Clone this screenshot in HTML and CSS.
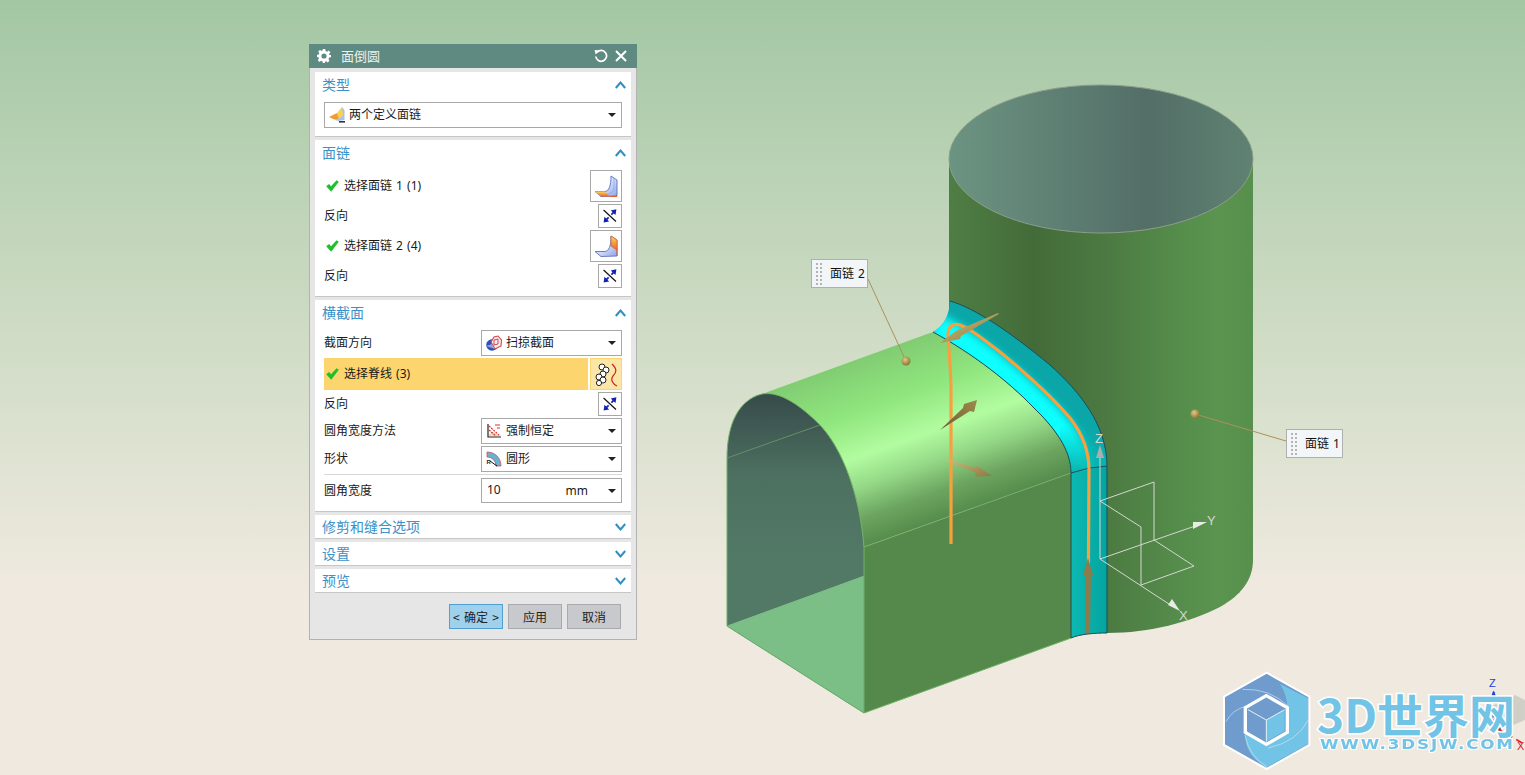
FILE: index.html
```html
<!DOCTYPE html>
<html lang="zh-CN">
<head>
<meta charset="utf-8">
<title>面倒圆</title>
<link rel="stylesheet" href="styles.css">
</head>
<body>
<svg width="0" height="0" class="defs">
  <defs>
    <linearGradient id="faceBlue" x1="0" y1="0" x2="1" y2="1">
      <stop offset="0" stop-color="#f8faff"/><stop offset=".55" stop-color="#cddaf8"/><stop offset="1" stop-color="#8ea4e8"/>
    </linearGradient>
    <linearGradient id="orangeBand" x1="0" y1="0" x2="0" y2="1">
      <stop offset="0" stop-color="#fbd860"/><stop offset="1" stop-color="#ee6320"/>
    </linearGradient>
    <symbol id="swap" viewBox="0 0 24 24">
      <path d="M5 5.5 L18.5 18" stroke="#111" stroke-width="1.3" fill="none"/>
      <path d="M13.5 10.5 L16 8 M10.5 13.5 L8 16" stroke="#1020b8" stroke-width="1.8" fill="none"/>
      <path d="M19 4.5 L18 11 L12.8 6 Z M5 19 L6 12.8 L11 18 Z" fill="#1020b8"/>
    </symbol>
    <symbol id="check" viewBox="0 0 13 12">
      <path d="M0.2 6.2 L3.1 3.9 L5 6.2 L10.6 0.2 L12.8 1.8 L5.2 11.8 Z" fill="#22bf2c"/>
    </symbol>
    <symbol id="faceA" viewBox="0 0 30 30">
      <path d="M20 5 L26 9 V25 L10 25.5 L4 20.5 H14 C18 20 20 15 20 5 Z" fill="url(#faceBlue)" stroke="#5a70c0" stroke-width=".9"/>
      <path d="M23 7 V17 C23 21 19 23.5 14 23.5" fill="none" stroke="#8ea2de" stroke-width=".7"/>
      <path d="M4 20.5 H14 L19 25.5 H10 Z" fill="url(#orangeBand)"/>
      <path d="M19 25.5 H26" stroke="#e0602a" stroke-width="1"/>
    </symbol>
    <symbol id="faceB" viewBox="0 0 30 30">
      <path d="M20 5 L26 9 V25 L10 25.5 L4 20.5 H14 C18 20 20 15 20 5 Z" fill="url(#faceBlue)" stroke="#5a70c0" stroke-width=".9"/>
      <path d="M20 5 L26 9 V19 L20 15 Z" fill="url(#orangeBand)" stroke="#e0602a" stroke-width=".8"/>
      <path d="M26 18 V25" stroke="#e0602a" stroke-width="1"/>
    </symbol>
  </defs>
</svg>

<main class="canvas">
  <svg class="scene" width="1525" height="775" viewBox="0 0 1525 775">
    <defs>
      <linearGradient id="cyl" gradientUnits="userSpaceOnUse" x1="949" y1="0" x2="1253" y2="0">
        <stop offset="0" stop-color="#4f7e45"/><stop offset=".28" stop-color="#436b39"/><stop offset=".52" stop-color="#4c7a42"/>
        <stop offset=".75" stop-color="#558c4b"/><stop offset=".88" stop-color="#5a944f"/><stop offset="1" stop-color="#57904d"/>
      </linearGradient>
      <linearGradient id="topFace" gradientUnits="userSpaceOnUse" x1="949" y1="0" x2="1253" y2="0">
        <stop offset="0" stop-color="#6c9482"/><stop offset=".65" stop-color="#536e67"/><stop offset="1" stop-color="#5f8272"/>
      </linearGradient>
      <linearGradient id="shell" gradientUnits="userSpaceOnUse" x1="930" y1="333" x2="990" y2="501.5">
        <stop offset="0" stop-color="#80cc72"/><stop offset=".28" stop-color="#90e67e"/><stop offset=".52" stop-color="#b2fca0"/>
        <stop offset=".68" stop-color="#95d987"/><stop offset=".85" stop-color="#6ca560"/><stop offset="1" stop-color="#568c4c"/>
      </linearGradient>
      <linearGradient id="inner" gradientUnits="userSpaceOnUse" x1="0" y1="394" x2="0" y2="560">
        <stop offset="0" stop-color="#374b4a"/><stop offset=".5" stop-color="#4d7161"/><stop offset="1" stop-color="#527866"/>
      </linearGradient>
      <linearGradient id="strip" gradientUnits="userSpaceOnUse" x1="1071" y1="0" x2="1107" y2="0">
        <stop offset="0" stop-color="#0cb9b2"/><stop offset="1" stop-color="#05a4a0"/>
      </linearGradient>
      <linearGradient id="stripFade" gradientUnits="userSpaceOnUse" x1="0" y1="425" x2="0" y2="472">
        <stop offset="0" stop-color="#0ab5b0" stop-opacity="0"/><stop offset="1" stop-color="#0ab5b0" stop-opacity="1"/>
      </linearGradient>
      <linearGradient id="brass" x1="0" y1="0" x2="1" y2="1">
        <stop offset="0" stop-color="#d2ba78"/><stop offset="1" stop-color="#8b7a45"/>
      </linearGradient>
      <linearGradient id="brassDark" x1="0" y1="1" x2="1" y2="0">
        <stop offset="0" stop-color="#6f5e33"/><stop offset="1" stop-color="#9c8a4c"/>
      </linearGradient>
      <radialGradient id="ball" cx=".4" cy=".35" r=".7">
        <stop offset="0" stop-color="#e2c884"/><stop offset="1" stop-color="#84702f"/>
      </radialGradient>
      <clipPath id="upperStrip">
        <path d="M950 301 C975 308 1010 332 1050 365 C1080 392 1107 425 1107 466 L1071 473 C1071 450 1055 428 1033 407 C1010 383 975 355 933 332 C945 325 949 315 950 301 Z"/>
      </clipPath>
      <filter id="soft" x="-20%" y="-20%" width="140%" height="140%"><feGaussianBlur stdDeviation="4.5"/></filter>
    </defs>

    <!-- vertical cylinder -->
    <path d="M949 159 V480 L1080 630 L1107 633 C1150 633 1190 622 1220 607 C1241 595 1253 580 1253 560 V159 Z" fill="url(#cyl)"/>
    <ellipse cx="1101" cy="159" rx="152" ry="74" fill="url(#topFace)" stroke="#8d9d8b" stroke-width="1"/>

    <!-- horizontal tunnel -->
    <path d="M727 626 V458 C727 425 738 400 762 394 C780 391 800 405 820 425 C842 448 860 495 864 547 V576 Z" fill="url(#inner)"/>
    <path d="M727 458 L820 425" stroke="#668f6a" stroke-width="1" fill="none"/>
    <path d="M727 626 L864 576 V713 Z" fill="#7bbe86" stroke="#6fb57c" stroke-width=".6"/>
    <path d="M864 547 L1071 473 V638 L864 713 Z" fill="#55894b"/>
    <path d="M933 332 C975 355 1010 383 1033 407 C1055 428 1071 450 1071 473 L864 547 C860 495 842 448 820 425 C800 405 780 391 762 394 L930 333 Z" fill="url(#shell)"/>
    <path d="M727 626 V458 C727 425 738 400 762 394 C780 391 800 405 820 425 C842 448 860 495 864 547 V713 L1071 638" fill="none" stroke="#6fb066" stroke-width="1"/>
    <path d="M727 626 L864 713" stroke="#66ad6a" stroke-width="1" fill="none"/>
    <path d="M864 547 L1071 473" stroke="#7ab06e" stroke-width="1" fill="none"/>

    <!-- blend strip -->
    <path d="M1071 473 L1107 466 V633 C1095 633 1080 634 1071 638 Z" fill="url(#strip)"/>
    <g clip-path="url(#upperStrip)">
      <rect x="925" y="295" width="190" height="185" fill="#0aa6a8"/>
      <path d="M935 326 C975 348 1015 383 1042 410 C1062 430 1078 450 1080 480" fill="none" stroke="#10ffff" stroke-width="27" filter="url(#soft)"/>
      <rect x="1060" y="420" width="50" height="55" fill="url(#stripFade)"/>
    </g>
    <path d="M950 301 C975 308 1010 332 1050 365 C1080 392 1107 425 1107 466 V633 C1095 633 1080 634 1071 638 V473 C1071 450 1055 428 1033 407 C1010 383 975 355 933 332" fill="none" stroke="#1f4c55" stroke-width="1"/>
    <path d="M1071 473 Q1088 467 1107 466" fill="none" stroke="#1f4c55" stroke-width="1"/>

    <!-- spine -->
    <path d="M951 544 V390 C951 370 949 355 948 335 C948 326 953 323 960 325 C972 329 985 341 1000 352 C1015 364 1028 376 1040 387 C1052 398 1062 409 1070 418 C1081 432 1089 448 1089 470 L1088 632" fill="none" stroke="#f8a040" stroke-width="3.2"/>

    <!-- direction arrows -->
    <polygon points="998,313 958,330 956,331 940,343 960,339 961,336 999,314" fill="url(#brass)"/>
    <polygon points="940,430 963,408 964,404 977,400 974,412 970,411" fill="url(#brassDark)"/>
    <polygon points="947,459.5 976,468 977,465.5 992,476 976,476.5 975,472.5 947,460.5" fill="url(#brass)"/>
    <polygon points="1086,633 1085,575 1083,575 1088,558 1093,575 1091,575 1090,633" fill="#8a7c4c"/>

    <!-- work triad -->
    <g fill="none" stroke="#d4d8d0" stroke-width="1">
      <path d="M1100 559 V455"/>
      <path d="M1100 559 L1198 525"/>
      <path d="M1100 559 L1172 606"/>
      <path d="M1100 501 L1154 482 V540 M1100 501 L1141 527 V585 M1154 540 L1194 566 L1141 585"/>
    </g>
    <polygon points="1100,445 1104,458 1096,458" fill="#a9b0ac"/>
    <polygon points="1207,522 1193,529 1193,522" fill="#e8ebe6"/>
    <polygon points="1180,611 1168,605 1172,599" fill="#e8ebe6"/>
    <text class="axis" x="1095" y="443">Z</text>
    <text class="axis" x="1207" y="525">Y</text>
    <text class="axis" x="1179" y="620">X</text>

    <!-- callout leaders -->
    <path d="M868 279 L906 361" stroke="#a8935a" stroke-width="1" fill="none"/>
    <circle cx="906" cy="361" r="4.5" fill="url(#ball)"/>
    <path d="M1286 441 L1195 414" stroke="#a8935a" stroke-width="1" fill="none"/>
    <circle cx="1195" cy="414" r="4.5" fill="url(#ball)"/>

    <!-- small corner triad -->
    <g transform="translate(1200 660) scale(.3333)">
      <polygon points="885,130 945,105 975,120 975,180 905,210 870,195" fill="#cfcfc6"/>
      <path d="M881 95 V190" stroke="#1b3fe0" stroke-width="6" stroke-dasharray="14 7"/>
      <polygon points="881,92 889,110 873,110" fill="#1b3fe0"/>
      <path d="M870 200 Q885 212 905 205" stroke="#666" stroke-width="7" fill="none"/>
      <path d="M890 205 L972 252" stroke="#d8222a" stroke-width="5" stroke-dasharray="20 14"/>
    </g>
    <text class="miniZ" x="1489" y="687">Z</text>
    <text class="miniX" x="1517" y="750">X</text>

    <!-- watermark logo -->
    <g transform="translate(1200 660) scale(.3333)">
      <polygon points="200,38 328,110 328,255 200,327 72,255 72,110" fill="#6f9ccd" stroke="#fff" stroke-width="6"/>
      <path d="M240 72 L324 115 V252 L200 322 C160 300 135 270 135 220 L199 253 L262 217 V143 Q262 105 240 72 Z" fill="#72c4e6"/>
      <path d="M128 88 Q210 85 264 138 M78 185 Q95 150 140 138 M135 225 Q148 290 200 320 M325 180 Q292 245 205 264" fill="none" stroke="#d3e3f3" stroke-width="2"/>
      <polygon points="199,107 262,143 262,217 199,253 136,217 136,143" fill="none" stroke="#fff" stroke-width="10"/>
      <polygon points="199,118 254,149 254,213 199,245 144,213 144,149" fill="#6f9ccd"/>
      <polygon points="254,149 254,213 199,245 199,180" fill="#72c4e6"/>
      <path d="M144 149 L199 180 L254 149 M199 180 V245" fill="none" stroke="#fff" stroke-width="2.5"/>
    </g>
  </svg>

  <div class="brand-name">3D世界网</div>
  <div class="brand-url">WWW.3DSJW.COM</div>

  <div class="callout callout-two"><span class="grip"></span><span class="callout-text">面链 2</span></div>
  <div class="callout callout-one"><span class="grip"></span><span class="callout-text">面链 1</span></div>

  <section class="dialog">
    <header class="titlebar">
      <svg class="title-gear" width="14" height="14" viewBox="0 0 14 14">
        <path d="M5.8 0 H8.2 L8.6 2 L10.1 2.7 L11.9 1.6 L13.4 3.4 L12 5 L12.4 6 H14 V8.2 L12.2 8.6 L11.5 10.1 L12.5 11.8 L10.8 13.4 L9.1 12.2 L8.2 12.5 L7.9 14 H5.8 L5.4 12.3 L4 11.8 L2.3 12.9 L.8 11.2 L1.9 9.6 L1.4 8.3 L0 8 V5.8 L1.8 5.4 L2.3 4.1 L1.2 2.5 L3 .9 L4.6 1.9 L5.5 1.6 Z M7 4.4 A2.6 2.6 0 1 0 7 9.6 A2.6 2.6 0 1 0 7 4.4 Z" fill="#fff" fill-rule="evenodd"/>
      </svg>
      <span class="title-text">面倒圆</span>
      <svg class="title-reset" width="14" height="14" viewBox="0 0 14 14">
        <path d="M3 3.4 A5.4 5.4 0 1 1 1.8 7.5" fill="none" stroke="#fff" stroke-width="1.7"/>
        <path d="M0.6 1 L5.6 1.4 L1.6 5.6 Z" fill="#fff"/>
      </svg>
      <svg class="title-close" width="12" height="12" viewBox="0 0 12 12">
        <path d="M1 1 L11 11 M11 1 L1 11" stroke="#fff" stroke-width="2" fill="none"/>
      </svg>
    </header>

    <div class="panel">
      <div class="group-head"><span class="group-title">类型</span><svg class="chev" viewBox="0 0 11 8"><path d="M.8 7 L5.5 1.5 L10.2 7" /></svg></div>
      <div class="group-body">
        <div class="select select-wide">
          <svg class="glyph" viewBox="0 0 16 16">
            <path d="M4 12 L9 6 L13 0 L15.5 3 V13 L9 14 Z" fill="#a9c0f0"/>
            <path d="M0 10 L8 6 L9.5 12 L4 12 Z" fill="#f29a32"/>
            <path d="M8 6 L13 0 L14 8 L10 12 Z" fill="#fbd34a"/>
            <path d="M10 14 H16 V15.6 H10 Z" fill="#333"/>
          </svg>
          <span class="select-text">两个定义面链</span><i class="caret"></i>
        </div>
      </div>
    </div>

    <div class="panel">
      <div class="group-head"><span class="group-title">面链</span><svg class="chev" viewBox="0 0 11 8"><path d="M.8 7 L5.5 1.5 L10.2 7" /></svg></div>
      <div class="group-body">
        <div class="row row-pick">
          <span class="pick"><svg class="check"><use href="#check"/></svg>选择面链 1 (1)</span>
          <span class="tool tool-big"><svg class="tool-art-big"><use href="#faceA"/></svg></span>
        </div>
        <div class="row"><span class="label">反向</span><span class="tool"><svg class="tool-art"><use href="#swap"/></svg></span></div>
        <div class="row row-pick">
          <span class="pick"><svg class="check"><use href="#check"/></svg>选择面链 2 (4)</span>
          <span class="tool tool-big"><svg class="tool-art-big"><use href="#faceB"/></svg></span>
        </div>
        <div class="row"><span class="label">反向</span><span class="tool"><svg class="tool-art"><use href="#swap"/></svg></span></div>
      </div>
    </div>

    <div class="panel">
      <div class="group-head"><span class="group-title">横截面</span><svg class="chev" viewBox="0 0 11 8"><path d="M.8 7 L5.5 1.5 L10.2 7" /></svg></div>
      <div class="group-body">
        <div class="row">
          <span class="label">截面方向</span>
          <div class="select">
            <svg class="glyph" viewBox="0 0 16 16">
              <circle cx="6" cy="10" r="5.8" fill="#2a52b8"/>
              <path d="M5 7 L8 2 L12 1 L15.5 5 L15 11 L9 14 Z" fill="#f3eef0" stroke="#d8404a" stroke-width="1.1"/>
              <path d="M8 5 L12 4 L12 9 L8 10 Z" fill="none" stroke="#d8404a" stroke-width="1"/>
              <path d="M0 11 L6 9 L9 14 Z" fill="#8fa6d8"/>
            </svg>
            <span class="select-text">扫掠截面</span><i class="caret"></i>
          </div>
        </div>
        <div class="row row-active">
          <span class="pick pick-active"><svg class="check"><use href="#check"/></svg>选择脊线 (3)</span>
          <span class="tool tool-big tool-active">
            <svg class="tool-art-big" viewBox="0 0 30 30">
              <g fill="#fff" stroke="#222" stroke-width="1">
                <circle cx="11" cy="8" r="3"/><circle cx="15" cy="11" r="3"/><circle cx="12" cy="15" r="3"/><circle cx="8" cy="18" r="3"/><circle cx="12" cy="21" r="3"/><circle cx="8" cy="24" r="2.6"/>
              </g>
              <path d="M21 5 C26 10 26 13 22 17 C19 21 22 25 26 27" fill="none" stroke="#cc2222" stroke-width="1.2"/>
            </svg>
          </span>
        </div>
        <div class="row"><span class="label">反向</span><span class="tool"><svg class="tool-art"><use href="#swap"/></svg></span></div>
        <div class="row">
          <span class="label">圆角宽度方法</span>
          <div class="select">
            <svg class="glyph" viewBox="0 0 16 16">
              <path d="M3 13 Q4 5 13 13 Z" fill="#f6d7a8"/>
              <path d="M2 1 V14 H15" fill="none" stroke="#222" stroke-width="1.2"/>
              <path d="M3 3 L14 13 M3 7 L10 13" stroke="#d83030" stroke-width="1.2" stroke-dasharray="2 1"/>
              <path d="M9 2 H14 M11 5 H14" stroke="#d83030" stroke-width="1"/>
            </svg>
            <span class="select-text">强制恒定</span><i class="caret"></i>
          </div>
        </div>
        <div class="row">
          <span class="label">形状</span>
          <div class="select">
            <svg class="glyph" viewBox="0 0 16 16">
              <path d="M1 1 C9 1 15 7 15 15 H10 C10 10 6 6 1 6 Z" fill="#62b5cf" stroke="#c8506a" stroke-width=".8"/>
              <path d="M4 10 L11 15" stroke="#111" stroke-width="1"/>
              <text class="glyph-r" x="0.5" y="13">R</text>
            </svg>
            <span class="select-text">圆形</span><i class="caret"></i>
          </div>
        </div>
        <div class="divider"></div>
        <div class="row row-input">
          <span class="label">圆角宽度</span>
          <div class="select select-input">
            <span class="input-value">10</span><span class="input-unit">mm</span><i class="caret"></i>
          </div>
        </div>
      </div>
    </div>

    <div class="panel panel-closed">
      <div class="group-head"><span class="group-title">修剪和缝合选项</span><svg class="chev" viewBox="0 0 11 8"><path d="M.8 1 L5.5 6.5 L10.2 1" /></svg></div>
    </div>
    <div class="panel panel-closed">
      <div class="group-head"><span class="group-title">设置</span><svg class="chev" viewBox="0 0 11 8"><path d="M.8 1 L5.5 6.5 L10.2 1" /></svg></div>
    </div>
    <div class="panel panel-closed">
      <div class="group-head"><span class="group-title">预览</span><svg class="chev" viewBox="0 0 11 8"><path d="M.8 1 L5.5 6.5 L10.2 1" /></svg></div>
    </div>

    <footer class="actions">
      <button class="btn btn-primary"><span>&lt;</span><span>确定</span><span>&gt;</span></button>
      <button class="btn">应用</button>
      <button class="btn">取消</button>
    </footer>
  </section>
</main>
</body>
</html>
```

FILE: styles.css
```css
* { box-sizing: border-box; }

html, body {
  margin: 0;
  height: 100%;
  overflow: hidden;
}

body {
  font-family: "Noto Sans", "Noto Sans CJK SC", sans-serif;
  font-size: 12px;
  color: #1a1a1a;
}

.defs { position: absolute; }

.canvas {
  position: relative;
  width: 1525px;
  height: 775px;
  background: linear-gradient(180deg, #a3c7a3 0, #c7d8bf 270px, #dfe3d2 460px, #f0e9e0 590px, #f0e9e0 775px);
}

.scene {
  position: absolute;
  left: 0;
  top: 0;
  display: block;
}

.axis {
  font: 13px "Liberation Sans", sans-serif;
  fill: #d4d8d0;
}

.miniZ {
  font: 11px "Liberation Sans", sans-serif;
  fill: #1b3fe0;
}

.miniX {
  font: 11px "Liberation Sans", sans-serif;
  fill: #d8222a;
}

.brand-name {
  position: absolute;
  left: 1317px;
  top: 690px;
  height: 46px;
  font: 700 46px/46px "Noto Sans CJK SC", sans-serif;
  color: #72c4e6;
  -webkit-text-stroke: 3px #fff;
  paint-order: stroke fill;
  white-space: nowrap;
}

.brand-url {
  position: absolute;
  left: 1320px;
  top: 737px;
  height: 15px;
  font: 700 14px/15px "DejaVu Sans", sans-serif;
  letter-spacing: 1.5px;
  color: #72c4e6;
  -webkit-text-stroke: 2px #fff;
  paint-order: stroke fill;
  white-space: nowrap;
  transform: scaleX(1.2);
  transform-origin: left center;
}

.callout {
  position: absolute;
  display: flex;
  align-items: center;
  gap: 7px;
  width: 57px;
  height: 29px;
  padding-left: 3px;
  background: #f2f6f8;
  border: 1px solid #aeb0b0;
  color: #111;
  white-space: nowrap;
}

.callout-two { left: 811px; top: 259px; }
.callout-one { left: 1286px; top: 429px; }

.callout-text {
  padding-bottom: 1px;
  word-spacing: 1px;
}

.grip {
  width: 8px;
  height: 24px;
  flex: none;
  background-image: radial-gradient(circle, #b4b4b4 1.2px, transparent 1.4px);
  background-size: 4px 4px;
}

.dialog {
  position: absolute;
  left: 309px;
  top: 44px;
  width: 328px;
  height: 596px;
  display: flex;
  flex-direction: column;
  gap: 4px;
  padding: 0 5px;
  background: #e6e6e6;
  border: 1px solid #b2b2b2;
  border-top: 0;
}

.titlebar {
  display: flex;
  align-items: center;
  flex: none;
  height: 24px;
  margin: 0 -6px;
  padding: 0 10px 0 8px;
  background: #5f8a82;
  color: #eaf2f0;
}

.title-gear { flex: none; }

.title-text {
  margin-left: 10px;
  padding-bottom: 2px;
  font-size: 13px;
  flex: 1;
}

.title-reset { margin-right: 7px; }

.panel {
  flex: none;
  padding: 0 9px 8px;
  background: #fff;
  box-shadow: 0 1px 0 #c6c6c6;
}

.panel-closed {
  height: 23px;
  padding-bottom: 0;
}

.group-head {
  display: flex;
  align-items: center;
  justify-content: space-between;
  height: 28px;
  margin: 0 -4px 2px -2px;
}

.panel-closed .group-head {
  height: 23px;
  margin-bottom: 0;
  padding-top: 2px;
}

.group-title {
  padding-bottom: 2px;
  font-size: 14px;
  color: #3a92c8;
  line-height: 1;
}

.chev {
  width: 11px;
  height: 8px;
  margin-bottom: 2px;
  fill: none;
  stroke: #2f8fc4;
  stroke-width: 2;
}

.group-body {
  display: flex;
  flex-direction: column;
  gap: 2px;
}

.row {
  display: flex;
  align-items: center;
  justify-content: space-between;
  min-height: 24px;
}

.label { padding-bottom: 2px; }

.row-pick { height: 32px; }

.row-active { height: 32px; }

.row-input { min-height: 25px; margin-top: 1px; }

.pick {
  display: flex;
  align-items: center;
  gap: 5px;
  padding-left: 2px;
  padding-bottom: 2px;
  white-space: pre;
  word-spacing: 1px;
}

.pick-active {
  align-self: stretch;
  width: 264px;
  background: #fcd56f;
}

.check {
  width: 13px;
  height: 12px;
  flex: none;
  margin-top: 2px;
}

.tool {
  display: flex;
  align-items: center;
  justify-content: center;
  width: 24px;
  height: 24px;
  background: #fff;
  border: 1px solid #a8a8a8;
}

.tool-big {
  width: 32px;
  height: 32px;
}

.tool-active {
  background: #fbe6a8;
  border-color: #fcd56f;
}

.tool-art {
  width: 22px;
  height: 22px;
}

.tool-art-big {
  width: 30px;
  height: 30px;
}

.select {
  position: relative;
  display: flex;
  align-items: center;
  width: 141px;
  height: 26px;
  padding-left: 4px;
  background: #fff;
  border: 1px solid #a8a8a8;
}

.select-wide { width: 298px; }

.select-input { height: 25px; padding-left: 5px; }

.glyph {
  flex: none;
  width: 16px;
  height: 16px;
  margin-right: 4px;
}

.glyph-r {
  font: 700 6px "Liberation Sans", sans-serif;
  fill: #222;
}

.select-text {
  flex: 1;
  padding-bottom: 2px;
}

.caret {
  flex: none;
  width: 0;
  height: 0;
  margin-right: 5px;
  border-left: 4px solid transparent;
  border-right: 4px solid transparent;
  border-top: 4px solid #222;
}

.input-value {
  flex: 1;
  padding-bottom: 2px;
  font: 12px "Noto Sans", sans-serif;
}

.input-unit {
  margin-right: 20px;
  font: 12px "Noto Sans", sans-serif;
}

.divider {
  height: 1px;
  background: #d8d8d8;
}

.actions {
  display: flex;
  justify-content: flex-end;
  gap: 5px;
  margin-top: 8px;
  padding-right: 10px;
}

.btn {
  width: 54px;
  height: 25px;
  padding: 0;
  font: 12px "Noto Sans CJK SC", sans-serif;
  color: #222;
  background: #c8c9cc;
  border: 1px solid #a9aaac;
  border-radius: 0;
}

.btn-primary {
  display: flex;
  align-items: center;
  justify-content: space-between;
  padding: 0 3px;
  background: #9fd0ec;
  border-color: #4f9fd0;
}
```
